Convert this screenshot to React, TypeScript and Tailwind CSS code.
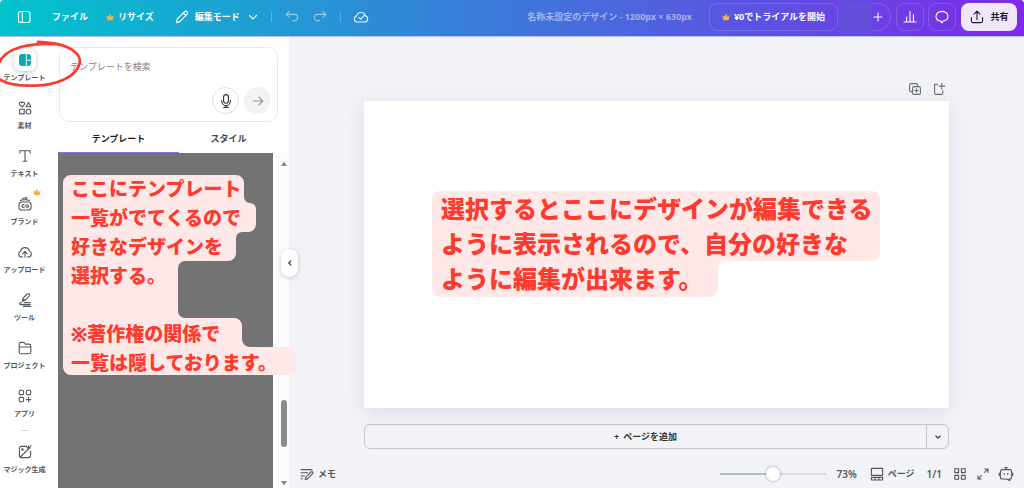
//React
import React, { useState, type ReactNode } from 'react'

//Types and Interfaces
interface RailItem {
    label: string
    icon: ReactNode
    active?: boolean
    premium?: boolean
}

interface IconProps {
    children: ReactNode
    className?: string
    box?: number
}

interface NoteProps {
    lines: string[]
    outline: string
    width: number
    height: number
    className: string
}

//Icons
const Icon = ({ children, className = 'size-4', box = 16 }: IconProps) => (
    <svg
        viewBox={`0 0 ${box} ${box}`}
        className={`shrink-0 ${className}`}
        fill="none"
        stroke="currentColor"
        strokeWidth="1.1"
        strokeLinecap="round"
        strokeLinejoin="round"
        aria-hidden="true"
    >
        {children}
    </svg>
)

const Crown = ({ className = '' }: { className?: string }) => (
    <svg
        viewBox="0 0 8 8"
        className={`size-2 shrink-0 ${className}`}
        fill="#f5b04c"
        aria-hidden="true"
    >
        <path d="M1.5 7.2 .3 2.6l2 1.2L4 .8l1.7 3 2-1.2-1.2 4.6z" />
    </svg>
)

const railItems: RailItem[] = [
    {
        label: 'テンプレート',
        active: true,
        icon: (
            <Icon>
                <path
                    d="M5 2h3.800v12H5a3 3 0 0 1-3-3V5a3 3 0 0 1 3-3zM9.800 2H11a3 3 0 0 1 3 3v2.800H9.800zM9.800 8.800H14V11a3 3 0 0 1-3 3H9.800z"
                    fill="currentColor"
                    stroke="none"
                />
            </Icon>
        ),
    },
    {
        label: '素材',
        icon: (
            <Icon>
                <path d="M5 7 2.6 4.6a1.4 1.4 0 0 1 2.4-1.7 1.4 1.4 0 0 1 2.4 1.7zM11.5 2.4l2.4 4.4H9.1zM2.6 9.3h4.6v4.6H2.6z" />
                <circle cx="11.5" cy="11.6" r="2.4" />
            </Icon>
        ),
    },
    {
        label: 'テキスト',
        icon: (
            <Icon>
                <path d="M2.8 5V2.8h10.4V5M8 2.8v10.4M6 13.2h4" />
            </Icon>
        ),
    },
    {
        label: 'ブランド',
        premium: true,
        icon: (
            <Icon>
                <rect x="2" y="6" width="12" height="8" rx="2.6" />
                <path d="M3.6 4.4c2.6-.8 5.8-.8 8.8 0M5.4 2.9c1.4-1 3-1.3 4.6-1.1l-1.4 2M7.2 9a1.4 1.4 0 1 0 0 2" />
                <circle cx="10.2" cy="10" r="1.3" />
            </Icon>
        ),
    },
    {
        label: 'アップロード',
        icon: (
            <Icon>
                <path d="M5.6 13H4.4a3 3 0 0 1-.8-5.8 4.5 4.5 0 0 1 8.8 0 3 3 0 0 1-.8 5.8h-1.4M8 13V7.6M5.9 9.6 8 7.5l2.1 2.1" />
            </Icon>
        ),
    },
    {
        label: 'ツール',
        icon: (
            <Icon>
                <path d="m5.4 9.2.6-3L10.2 2a1.3 1.3 0 0 1 2 1.8L8.4 8.2zM5.4 9.2l2-2M4.4 10.6H3.6a1 1 0 0 0 0 2h9.6M13.2 10.6H7.4M6.4 14.4h7" />
            </Icon>
        ),
    },
    {
        label: 'プロジェクト',
        icon: (
            <Icon>
                <path d="M2.2 12V4.2a1.8 1.8 0 0 1 1.8-1.8h2.4c.7 0 1 .3 1.3.8l.6.9H12a1.8 1.8 0 0 1 1.8 1.8V12a1.8 1.8 0 0 1-1.8 1.8H4A1.8 1.8 0 0 1 2.2 12zM2.2 7h11.6" />
            </Icon>
        ),
    },
    {
        label: 'アプリ',
        icon: (
            <Icon>
                <rect x="2.2" y="2.2" width="4.4" height="4.4" rx="1.2" />
                <rect x="9.4" y="2.2" width="4.4" height="4.4" rx="1.2" />
                <rect x="2.2" y="9.4" width="4.4" height="4.4" rx="1.2" />
                <path d="M11.6 9.4v4.4M9.4 11.6h4.4" />
            </Icon>
        ),
    },
]

const magicItem: RailItem = {
    label: 'マジック生成',
    icon: (
        <Icon>
            <path d="M9.6 2.4H4.4a2 2 0 0 0-2 2v7.2a2 2 0 0 0 2 2h7.2a2 2 0 0 0 2-2V7M3.4 13 13 3.4M11.6 2.2l.5 1 1 .5-1 .5-.5 1-.5-1-1-.5 1-.5z" />
            <circle cx="5.4" cy="5.6" r=".7" fill="currentColor" />
            <circle cx="13.6" cy="1.8" r=".3" />
        </Icon>
    ),
}

//Custom components
const RailButton = ({ item }: { item: RailItem }) => (
    <button
        type="button"
        className="relative flex h-12 w-full flex-col items-center gap-1 pt-2 text-[#54575c]"
    >
        {item.active ? (
            <span className="-my-[3px] flex size-[22px] items-center justify-center rounded-md bg-white text-[#12a3b4] shadow-[0_1px_4px_rgba(40,50,80,0.3)]">
                {item.icon}
            </span>
        ) : (
            item.icon
        )}
        {item.premium && <Crown className="absolute top-0 right-2" />}
        <span className="text-[7px] leading-3 font-bold whitespace-nowrap">{item.label}</span>
    </button>
)

const Note = ({ lines, outline, width, height, className }: NoteProps) => (
    <div className={`pointer-events-none absolute z-10 font-black whitespace-nowrap text-[#ff3b30] ${className}`}>
        <svg
            viewBox={`0 0 ${width} ${height}`}
            width={width}
            height={height}
            className="absolute top-0 left-0 -z-10"
            aria-hidden="true"
        >
            <path d={outline} fill="#ffe9e8" />
        </svg>
        {lines.map((line, index) => (
            <p key={index}>{line || '\u00a0'}</p>
        ))}
    </div>
)

const Header = () => (
    <header className="flex h-[37px] items-center rounded-t border-b border-[#b9c4ee] bg-linear-to-r/srgb from-[#00c4cc] to-[#7d2ae8] pr-[7px] pb-0.5 pl-4 text-[9px] font-bold text-white">
        <button type="button" aria-label="メニュー">
            <Icon>
                <rect x="2.5" y="2.5" width="11.5" height="11" rx="2" />
                <path d="M6.3 2.5v11" />
            </Icon>
        </button>
        <button type="button" className="ml-5">
            ファイル
        </button>
        <button type="button" className="ml-[18px] flex items-center gap-1">
            <Crown />
            リサイズ
        </button>
        <button type="button" className="ml-5 flex items-center gap-[5px]">
            <Icon>
                <path d="m2.4 13.6.8-3.6 7.2-7.2a1.7 1.7 0 0 1 2.6 2.5L5.7 12.6zM9.3 4l2.6 2.6" />
            </Icon>
            編集モード
            <Icon className="ml-0.5 size-3" box={12}>
                <path d="m2.5 4.5 3.5 3.3 3.5-3.3" />
            </Icon>
        </button>
        <span className="ml-3 h-2.5 w-px bg-white/25" />
        <button type="button" className="ml-3 text-white/50" aria-label="元に戻す">
            <Icon>
                <path d="M5 2.6 2.2 5.4 5 8.2M2.4 5.4h8a3 3 0 0 1 0 6.2H8.6" />
            </Icon>
        </button>
        <button type="button" className="ml-3 text-white/50" aria-label="やり直す">
            <Icon>
                <path d="m11 2.6 2.8 2.8L11 8.2M13.6 5.4h-8a3 3 0 0 0 0 6.2h1.8" />
            </Icon>
        </button>
        <span className="ml-3 h-2.5 w-px bg-white/25" />
        <button type="button" className="ml-3 text-white/90" aria-label="保存済み">
            <Icon>
                <path d="M4.2 13a3.1 3.1 0 0 1-.8-6 4.8 4.8 0 0 1 9.2 0 3.1 3.1 0 0 1-.8 6zM5.8 8.4l1.8 1.8 3.6-3.8" />
            </Icon>
        </button>
        <div className="ml-auto flex items-center">
            <span className="text-white/50">名称未設定のデザイン - 1200px × 630px</span>
            <button
                type="button"
                className="ml-[17px] flex h-7 w-[129px] items-center justify-center gap-1 rounded-lg border border-white/15"
            >
                <Crown />
                ¥0でトライアルを開始
            </button>
            <span className="ml-px h-[33px] w-[33px] bg-[#654fdd]" />
            <button
                type="button"
                className="flex h-7 w-[19px] items-center rounded-r-full border border-l-0 border-white/15"
                aria-label="メンバーを追加"
            >
                <Icon className="size-3" box={12}>
                    <path d="M6 2v8M2 6h8" />
                </Icon>
            </button>
            <button
                type="button"
                className="ml-[5px] flex size-7 items-center justify-center rounded-lg border border-white/15"
                aria-label="アナリティクス"
            >
                <Icon>
                    <path d="M2 13h12M4.6 12.6V8M8 12.6V2.6M11.4 12.6V5.6" />
                </Icon>
            </button>
            <button
                type="button"
                className="ml-1 flex size-7 items-center justify-center rounded-lg border border-white/15"
                aria-label="コメント"
            >
                <Icon>
                    <path d="M8 2.4c3.4 0 6 2.1 6 4.8 0 2.600-2 4.500-4.800 4.800L7.800 14l-.7-1.900C4 11.900 2 9.900 2 7.200c0-2.700 2.600-4.800 6-4.800z" />
                </Icon>
            </button>
            <button
                type="button"
                className="ml-[5px] flex h-7 w-14 items-center justify-center gap-[5px] rounded-lg bg-[#f0e7fc] text-[#1b1c22]"
            >
                <Icon>
                    <path d="M2.4 8.6v3.2a1.8 1.8 0 0 0 1.8 1.8h7.6a1.8 1.8 0 0 0 1.8-1.8V8.6M8 10.6V2.4M5 5.2l3-3 3 3" />
                </Icon>
                共有
            </button>
        </div>
    </header>
)

const TemplatePanel = () => (
    <section className="relative flex w-60 shrink-0 flex-col bg-white pt-2.5 text-[9px]">
        <div className="mr-[11px] ml-2.5 flex h-[75px] flex-col rounded-[10px] border border-[#e9e5fb] px-2.5 pt-2 pb-[7px]">
            <input
                type="text"
                placeholder="テンプレートを検索"
                aria-label="テンプレートを検索"
                className="h-5 w-full bg-transparent outline-none placeholder:text-[#7c7f85]"
            />
            <div className="mt-auto -mr-1 flex justify-end gap-[5px]">
                <button
                    type="button"
                    className="flex size-[27px] items-center justify-center rounded-full border border-[#dfe0e4] text-[#303236]"
                    aria-label="音声入力"
                >
                    <Icon>
                        <rect x="5.6" y="1.6" width="4.8" height="8.6" rx="2.4" />
                        <path d="M3.8 7.6v.8a4.200 4.200 0 0 0 8.400 0v-.8M8 12.600v1.800M5.800 14.400h4.400" />
                    </Icon>
                </button>
                <button
                    type="button"
                    className="flex size-[27px] items-center justify-center rounded-full bg-[#f2f3f5] text-[#909398]"
                    aria-label="送信"
                >
                    <Icon>
                        <path d="M3.2 8h9.6M9 4.2 12.8 8 9 11.8" />
                    </Icon>
                </button>
            </div>
        </div>
        <div className="mr-[11px] ml-[9px] flex h-[31px] font-bold">
            <button type="button" className="flex-[11] border-b border-[#8f6fd8] pt-1 text-[#1b1c20]">
                テンプレート
            </button>
            <button type="button" className="flex-[9] pt-[3px] text-[#44474c]">
                スタイル
            </button>
        </div>
        <div className="flex flex-1">
            <div className="ml-[9px] flex-1 bg-[#737373]" />
            <div className="ml-[5px] flex w-[11px] flex-col items-center bg-[#fbfbfb] pt-2 pb-0.5">
                <svg viewBox="0 0 6 5" className="h-[5px] w-1.5" fill="#85878a" aria-hidden="true">
                    <path d="M3 .5 6 5H0z" />
                </svg>
                <span className="mt-auto h-[47px] w-1.5 rounded-full bg-[#8b8b8b]" />
                <svg viewBox="0 0 6 5" className="mt-[34px] h-[5px] w-1.5" fill="#85878a" aria-hidden="true">
                    <path d="M3 4.5 6 0H0z" />
                </svg>
            </div>
        </div>
        <button
            type="button"
            className="absolute top-[212px] -right-[9px] z-10 flex h-7 w-[17px] items-center justify-center rounded-full bg-white text-[#2c2e33] shadow-[0_1px_4px_rgba(40,50,80,0.25)]"
            aria-label="パネルを閉じる"
        >
            <Icon className="size-2" box={8}>
                <path d="M5 1.8 2.8 4 5 6.2" />
            </Icon>
        </button>
        <Note
            className="top-[138px] left-3.5 pl-2 text-[19px] leading-[29px]"
            width={234}
            height={201}
            outline="M8 0H173a8 8 0 0 1 8 8V22a6 6 0 0 0 6 6a6 6 0 0 1 6 6V49a8 8 0 0 1-8 8H179a6 6 0 0 0-6 6V78a8 8 0 0 1-8 8H122a7 7 0 0 0-7 7V136a7 7 0 0 0 7 7H171a8 8 0 0 1 8 8V164a8 8 0 0 0 8 8H225a8 8 0 0 1 8 8V192a8 8 0 0 1-8 8H8a8 8 0 0 1-8-8V8a8 8 0 0 1 8-8z"
            lines={[
                'ここにテンプレート',
                '一覧がでてくるので',
                '好きなデザインを',
                '選択する。',
                '',
                '※著作権の関係で',
                '一覧は隠しております。',
            ]}
        />
    </section>
)

const Footer = () => {
    const [zoom, setZoom] = useState<number>(50)

    return (
        <footer className="mt-auto flex h-7 items-center px-2.5 text-[9px] font-bold text-[#54575c]">
            <button type="button" className="flex items-center gap-[3px]">
                <Icon>
                    <path d="M2 3.6h11M2 6.8h6.6M2 10h3.4M6.2 13.6l.6-2.4L12 6a1.1 1.1 0 0 1 1.7 1.7l-5.2 5.2zM2 12.8h1.6" />
                </Icon>
                メモ
            </button>
            <input
                type="range"
                min={0}
                max={100}
                value={zoom}
                onChange={(e) => setZoom(Number(e.target.value))}
                aria-label="ズーム"
                className="ml-auto h-0.5 w-[107px] appearance-none rounded-full bg-linear-to-r from-[#b4bac6] from-50% to-[#d8dbe2] to-50% [&::-webkit-slider-thumb]:size-3.5 [&::-webkit-slider-thumb]:appearance-none [&::-webkit-slider-thumb]:rounded-full [&::-webkit-slider-thumb]:bg-white [&::-webkit-slider-thumb]:shadow-[0_0_3px_rgba(40,50,80,0.45)]"
            />
            <span className="ml-2.5 text-[10px] font-semibold">73%</span>
            <button type="button" className="ml-3 flex items-center gap-[3px]">
                <Icon>
                    <path d="M2.4 2.4h11.2v7H2.4zM2.4 11.4h11.2V14H2.4zM6.1 11.4V14M9.900 11.4V14" />
                </Icon>
                ページ
            </button>
            <span className="ml-3 text-[10px] font-semibold">1/1</span>
            <button type="button" className="ml-2.5" aria-label="グリッド表示">
                <Icon>
                    <path d="M2.8 2.8h3.8v3.8H2.8zM9.4 2.8h3.8v3.8H9.4zM2.8 9.4h3.8v3.8H2.8zM9.4 9.4h3.8v3.8H9.4z" />
                </Icon>
            </button>
            <button type="button" className="ml-[7px]" aria-label="全画面表示">
                <Icon>
                    <path d="m9.6 6.4 3.200-3.200M9.800 3h3.200v3.200M6.400 9.600l-3.200 3.200M3 9.800V13h3.200" />
                </Icon>
            </button>
            <button type="button" className="ml-[7px]" aria-label="アシスタント">
                <Icon>
                    <path d="M8 1.4v2.2M6.6 1.8h2.800M4.4 3.6h7.200a2 2 0 0 1 2 2V11a2 2 0 0 1-2 2H11l.8 1.600L8.200 13H4.400a2 2 0 0 1-2-2V5.600a2 2 0 0 1 2-2zM1.200 7v2.600M14.800 7v2.600M6.200 7.600v1M9.800 7.600v1" />
                </Icon>
            </button>
        </footer>
    )
}

const App = () => {
    return (
        <div className="flex min-h-screen flex-col bg-[#f2f3f7] font-['Noto_Sans','Noto_Sans_CJK_JP',sans-serif]">
            <Header />
            <div className="relative flex flex-1">
                <nav className="flex w-[49px] shrink-0 flex-col bg-white pt-[7px]">
                    {railItems.map((item) => (
                        <RailButton key={item.label} item={item} />
                    ))}
                    <hr className="mx-auto mt-0.5 mb-[5px] w-2 border-[#d5d7dc]" />
                    <RailButton item={magicItem} />
                </nav>
                <TemplatePanel />
                <main className="flex min-w-0 flex-1 flex-col">
                    <div className="relative flex flex-col px-[75px] pt-11">
                        <div className="flex justify-end gap-2 pr-0.5 pb-1 text-[#6b6e74]">
                            <button type="button" aria-label="ページを複製">
                                <Icon>
                                    <path d="M5 10.6H4a1.4 1.4 0 0 1-1.4-1.4V4A1.4 1.4 0 0 1 4 2.6h5.2A1.4 1.4 0 0 1 10.6 4v1" />
                                    <rect x="5.6" y="5.6" width="7.8" height="7.8" rx="1.4" />
                                    <path d="M9.5 7.7v3.6M7.7 9.5h3.6" />
                                </Icon>
                            </button>
                            <button type="button" aria-label="ページを追加">
                                <Icon>
                                    <path d="M6.4 3.4H3.600V12A1.400 1.400 0 0 0 5 13.400h5.400a1.400 1.400 0 0 0 1.400-1.400V9.800M10.800 2.200V8M8 5.100h5.700" />
                                </Icon>
                            </button>
                        </div>
                        <div className="relative aspect-[1200/630] w-full bg-white shadow-[0_4px_20px_rgba(60,70,110,0.12)]">
                            <Note
                                className="top-[90px] left-[68px] pl-[9px] text-[24px] leading-[35px]"
                                width={449}
                                height={107}
                                outline="M8 0H440a8 8 0 0 1 8 8V62a8 8 0 0 1-8 8H294a8 8 0 0 0-8 8V98a8 8 0 0 1-8 8H8a8 8 0 0 1-8-8V8a8 8 0 0 1 8-8z"
                                lines={[
                                    '選択するとここにデザインが編集できる',
                                    'ように表示されるので、自分の好きな',
                                    'ように編集が出来ます。',
                                ]}
                            />
                        </div>
                        <div className="mt-4 flex h-[25px] rounded-md border border-[#c3c5cb] text-[9px] font-bold text-[#303236]">
                            <button type="button" className="flex flex-1 items-center justify-center gap-1">
                                <span>+</span>
                                ページを追加
                            </button>
                            <button
                                type="button"
                                className="flex w-[22px] items-center justify-center border-l border-[#c3c5cb]"
                                aria-label="ページの種類"
                            >
                                <Icon className="size-2" box={8}>
                                    <path d="M1.8 3 4 5.2 6.2 3" />
                                </Icon>
                            </button>
                        </div>
                    </div>
                    <Footer />
                </main>
                <svg
                    viewBox="0 0 84 50"
                    className="pointer-events-none absolute top-0.5 left-0 z-20 h-[50px] w-[84px]"
                    fill="none"
                    stroke="#ff3b30"
                    strokeWidth="2.8"
                    strokeLinecap="round"
                    aria-hidden="true"
                >
                    <path d="M38 3c10 .4 22 1.6 30 5.4 10 4.6 14 11.6 10.600 19C74 38 57 46 36 46.600 20 47.200 6 45-1 40" />
                    <path d="M-1 24C3 15 13 9 27 6.6 36 5 46 4.6 54 5.2" />
                </svg>
            </div>
        </div>
    )
}

export default App
